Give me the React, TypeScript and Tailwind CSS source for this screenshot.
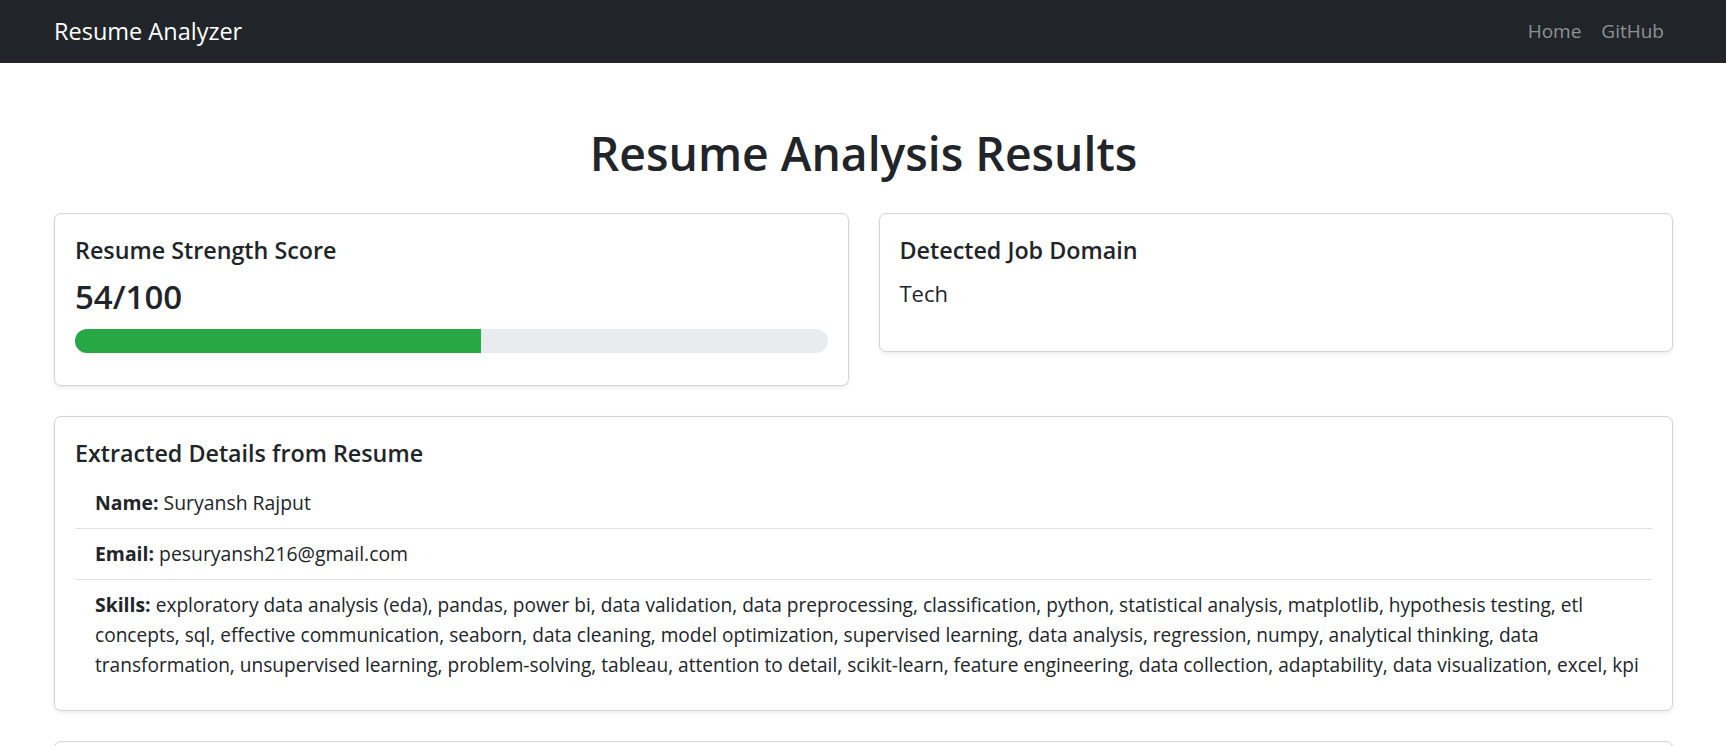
const SKILL_LINES = [
  "exploratory data analysis (eda), pandas, power bi, data validation, data preprocessing, classification, python, statistical analysis, matplotlib, hypothesis testing, etl",
  "concepts, sql, effective communication, seaborn, data cleaning, model optimization, supervised learning, data analysis, regression, numpy, analytical thinking, data",
  "transformation, unsupervised learning, problem-solving, tableau, attention to detail, scikit-learn, feature engineering, data collection, adaptability, data visualization, excel, kpi",
];

const SCORE = 54;

function Navbar() {
  return (
    <nav className="flex h-[63px] items-center justify-between bg-[#212529] pl-[54px] pr-[62px]">
      <a href="#" className="text-[23.5px] leading-none text-white">
        Resume Analyzer
      </a>
      <div className="flex items-center">
        <a href="#" className="px-[10px] text-[19px] leading-none text-[#8f9194]">
          Home
        </a>
        <a href="#" className="pl-[10px] text-[19px] leading-none text-[#8f9194]">
          GitHub
        </a>
      </div>
    </nav>
  );
}

function Card({ className = "", children }: { className?: string; children?: React.ReactNode }) {
  return (
    <div
      className={`rounded-[7px] border border-[#d3d4d5] bg-white px-5 shadow-[0_2px_4px_rgba(0,0,0,0.075)] ${className}`}
    >
      {children}
    </div>
  );
}

function Item({ label, children, last }: { label: string; children: React.ReactNode; last?: boolean }) {
  return (
    <li className={`px-5 py-[10px] ${last ? "" : "border-b border-[#dee2e6]"}`}>
      <strong className="font-bold">{label}:</strong> {children}
    </li>
  );
}

export default function App() {
  return (
    <div className="min-h-screen bg-white font-['Open_Sans',sans-serif] text-[#212529]">
      <Navbar />

      <main className="pl-[54px] pr-[53px]">
        <h1 className="mt-[62px] mb-[30px] text-center text-[46.3px] leading-[58px] font-semibold">
          Resume Analysis Results
        </h1>

        <div className="grid grid-cols-2 items-start gap-[30px]">
          <Card className="pt-[22px] pb-[32px]">
            <h5 className="text-[23.3px] leading-[29px] font-semibold">Resume Strength Score</h5>
            <div className="mt-[12px] text-[33px] leading-[40px] font-semibold">{SCORE}/100</div>
            <div className="mt-[12px] h-[24px] overflow-hidden rounded-full bg-[#e9ecef]">
              <div className="h-full bg-[#28a745]" style={{ width: `${SCORE}%` }} />
            </div>
          </Card>

          <Card className="pt-[22px] pb-[41px]">
            <h5 className="text-[23.3px] leading-[29px] font-semibold">Detected Job Domain</h5>
            <p className="mt-[12px] text-[22px] leading-[33px]">Tech</p>
          </Card>
        </div>

        <Card className="mt-[30px] pt-[22px] pb-[20px]">
          <h5 className="text-[23.3px] leading-[29px] font-semibold">Extracted Details from Resume</h5>
          <ul className="mt-[10px] text-[19.4px] leading-[30px]">
            <Item label="Name">Suryansh Rajput</Item>
            <Item label="Email">pesuryansh216@gmail.com</Item>
            <Item label="Skills" last>
              {SKILL_LINES.map((line, i) => (
                <span key={i} className="whitespace-nowrap text-[19.1px]">
                  {i > 0 && <br />}
                  {line}
                </span>
              ))}
            </Item>
          </ul>
        </Card>

        {/* next section starts just below the fold */}
        <Card className="mt-[30px] mb-[30px] h-[120px]" />
      </main>
    </div>
  );
}
